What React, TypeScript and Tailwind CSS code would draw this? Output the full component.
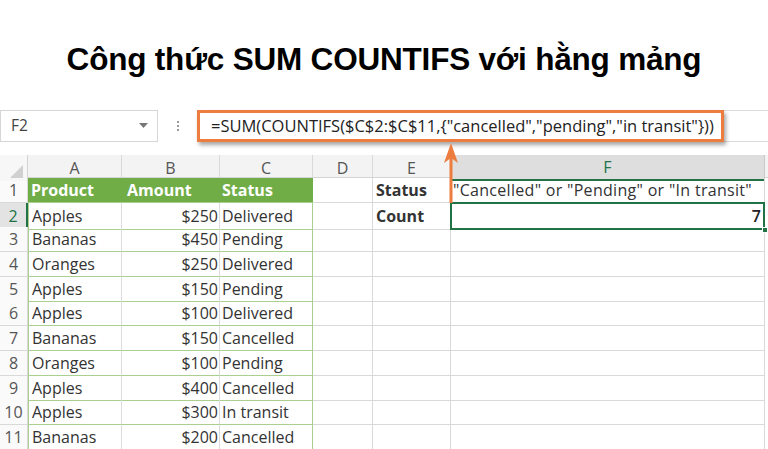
import React from "react";

const rows = [
  ["Apples", "$250", "Delivered"],
  ["Bananas", "$450", "Pending"],
  ["Oranges", "$250", "Delivered"],
  ["Apples", "$150", "Pending"],
  ["Apples", "$100", "Delivered"],
  ["Bananas", "$150", "Cancelled"],
  ["Oranges", "$100", "Pending"],
  ["Apples", "$400", "Cancelled"],
  ["Apples", "$300", "In transit"],
  ["Bananas", "$200", "Cancelled"],
];

const cols = "grid grid-cols-[28px_94px_98px_93px_60px_78px_314px_3px]";
const formula = '=SUM(COUNTIFS($C$2:$C$11,{"cancelled","pending","in transit"}))';
const f1 = '"Cancelled" or "Pending" or "In transit"';

export default function App() {
  return (
    <div
      className="w-[768px] h-[449px] bg-white overflow-hidden relative text-[#333]"
      style={{ fontFamily: '"Open Sans", "Noto Sans", sans-serif' }}
    >
      {/* Title */}
      <div className="h-[110px] flex items-center justify-center pt-[10px]">
        <h1
          className="text-[31.5px] font-bold text-black tracking-[-0.2px]"
          style={{ fontFamily: '"Liberation Sans", Arial, sans-serif' }}
        >
          Công thức SUM COUNTIFS với hằng mảng
        </h1>
      </div>

      {/* Formula bar */}
      <div className="h-[32px] flex items-stretch">
        <div className="w-[158px] border border-[#d6d6d6] flex items-center justify-between pl-[10px] pr-[9px] text-[15.5px] text-[#444]">
          <span>F2</span>
          <svg width="9" height="6" viewBox="0 0 9 6">
            <path d="M0 0 L9 0 L4.5 5 Z" fill="#777" />
          </svg>
        </div>
        <div className="w-[39px] flex flex-col items-center justify-center gap-[2px]">
          <span className="w-[2px] h-[2px] bg-[#999]" />
          <span className="w-[2px] h-[2px] bg-[#999]" />
          <span className="w-[2px] h-[2px] bg-[#999]" />
        </div>
        <div className="flex-1 border-y border-[#dcdcdc] flex items-stretch">
          <div className="w-[527px] -my-[1px] border-[3px] border-[#ec7d3e] bg-white flex items-center pl-[11px] text-[16.5px] text-[#222] shadow-[2px_3px_4px_rgba(0,0,0,0.35)] whitespace-nowrap">
            {formula}
          </div>
        </div>
      </div>

      {/* Gap */}
      <div className="h-[13px]" />

      {/* Column headers */}
      <div className={`${cols} h-[23px] bg-[#f3f3f3] border-b border-[#d4d4d4] text-[16px] text-[#555]`}>
        <div className="relative border-r border-[#d4d4d4] bg-[#f7f7f7]">
          <svg className="absolute right-[4px] bottom-[3px]" width="13" height="13" viewBox="0 0 13 13">
            <path d="M13 0 L13 13 L0 13 Z" fill="#d0d0d0" />
          </svg>
        </div>
        {["A", "B", "C", "D", "E"].map((c) => (
          <div key={c} className="flex items-center justify-center border-r border-[#d9d9d9]">
            {c}
          </div>
        ))}
        <div className="flex items-center justify-center bg-[#dedede] text-[#217346] border-b-2 border-[#217346] border-r border-r-[#c8c8c8]">
          F
        </div>
        <div />
      </div>

      {/* Row 1 */}
      <div className={`${cols} h-[24.7px] text-[16px]`}>
        <div className="flex items-center justify-center text-[#555] bg-[#fafafa] border-r border-b border-[#d9d9d9]">1</div>
        <div className="bg-[#70ad47] text-white font-bold flex items-center pl-[3px] border-b border-[#a9d08e]">Product</div>
        <div className="bg-[#70ad47] text-white font-bold flex items-center pl-[5px] border-b border-[#a9d08e]">Amount</div>
        <div className="bg-[#70ad47] text-white font-bold flex items-center pl-[2px] border-b border-[#a9d08e]">Status</div>
        <div className="border-r border-b border-[#d9d9d9]" />
        <div className="font-bold flex items-center pl-[3px] border-r border-b border-[#d9d9d9]">Status</div>
        <div className="flex items-center pl-[2px] border-r border-b border-[#d9d9d9] whitespace-nowrap tracking-[0.3px]">
          {f1}
        </div>
        <div />
      </div>

      {/* Data rows */}
      {rows.map((r, i) => {
        const n = i + 2;
        const sel = n === 2;
        return (
          <div key={n} className={`${cols} h-[24.7px] text-[16px]`}>
            <div
              className={`flex items-center justify-center border-b border-[#d9d9d9] ${
                sel ? "bg-[#e3e3e3] text-[#217346] border-r-2 border-r-[#217346]" : "bg-[#fafafa] text-[#555] border-r border-r-[#d9d9d9]"
              }`}
            >
              {n}
            </div>
            <div className="flex items-center pl-[3px] border-l border-b border-r border-[#a9d08e] border-r-[#dcdcdc]">{r[0]}</div>
            <div className="flex items-center justify-end pr-[1px] border-b border-r border-[#a9d08e] border-r-[#dcdcdc]">{r[1]}</div>
            <div className="flex items-center pl-[2px] border-b border-r border-[#a9d08e] whitespace-nowrap">{r[2]}</div>
            <div className="border-r border-b border-[#d9d9d9]" />
            <div className="font-bold flex items-center pl-[3px] border-r border-b border-[#d9d9d9]">
              {sel ? "Count" : ""}
            </div>
            {sel ? (
              <div className="relative flex items-center justify-end pr-[2px] border-2 border-[#217346] -mt-[1px] -ml-[1px]">
                <span className="font-semibold text-[#222]">7</span>
                <span className="absolute -right-[5px] -bottom-[5px] w-[6px] h-[6px] bg-[#217346] border border-white" />
              </div>
            ) : (
              <div className="border-r border-b border-[#d9d9d9]" />
            )}
            <div />
          </div>
        );
      })}

      {/* Orange arrow */}
      <svg className="absolute left-[442px] top-[141px]" width="18" height="63" viewBox="0 0 18 63">
        <path d="M9 2 L16 22 L10.5 18 L10.5 62 L7.5 62 L7.5 18 L2 22 Z" fill="#ec7d3e" />
      </svg>
    </div>
  );
}
